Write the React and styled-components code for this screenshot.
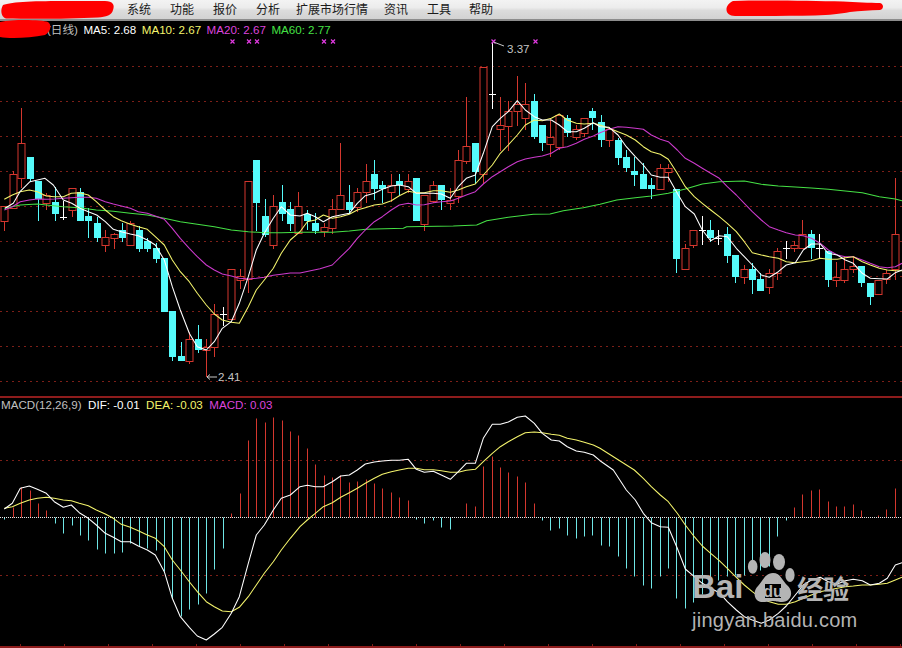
import React from "react";
import styled, { createGlobalStyle } from "styled-components";

const RED = "#d4372e";
const CYAN = "#55fbfb";
const WHITE = "#ffffff";
const YELLOW = "#f4f46c";
const MAGENTA = "#cc3acc";
const GREEN = "#45e045";
const GRID = "#7d1f18";

const menuItems = [
  { label: "系统", width: 43 },
  { label: "功能", width: 43 },
  { label: "报价", width: 43 },
  { label: "分析", width: 40 },
  { label: "扩展市场行情", width: 88 },
  { label: "资讯", width: 43 },
  { label: "工具", width: 42 },
  { label: "帮助", width: 30 },
];

// type, body top, body bottom, high, low
const candles = [
  ["r",206,221,206,231],["r",174,208,171,209],["r",143,178,108,188],["c",157,179,157,182],
  ["c",181,199,181,221],["r",195,203,193,210],["c",202,214,187,221],["w",217,217,201,220],
  ["r",188,210,188,217],["c",192,221,188,221],["c",216,221,208,238],["c",223,238,217,242],
  ["r",237,245,230,252],["r",234,238,233,249],["c",230,238,223,242],["r",223,245,221,245],
  ["c",230,249,226,252],["c",241,249,238,252],["c",248,259,243,263],["c",258,312,258,312],
  ["c",311,357,311,361],["c",356,361,342,361],["r",339,361,332,364],["c",339,350,325,353],
  ["r",347,350,339,377],["r",314,347,304,357],["w",314,314,307,326],["r",269,319,269,319],
  ["r",276,280,269,289],["r",181,279,181,293],["c",160,203,160,231],["c",216,235,199,237],
  ["r",206,245,195,249],["c",202,214,185,221],["c",209,224,202,231],["r",206,233,192,233],
  ["c",214,221,210,230],["c",223,231,213,234],["r",227,231,223,237],["r",209,228,199,234],
  ["r",195,209,143,210],["c",202,210,185,214],["r",192,207,188,212],["r",181,192,164,203],
  ["c",174,189,160,200],["c",185,189,181,203],["r",185,192,174,202],["c",181,185,174,196],
  ["r",181,189,174,193],["c",178,221,178,221],["r",195,224,195,231],["r",185,201,181,203],
  ["c",185,200,185,210],["r",200,203,188,210],["r",160,196,150,203],["r",146,161,97,164],
  ["c",143,172,143,184],["r",67,174,67,184],["w",94,94,42,109],["r",125,129,97,151],
  ["r",111,126,101,151],["r",104,111,76,126],["r",104,118,83,130],["c",101,137,94,139],
  ["c",125,143,125,151],["r",137,144,118,157],["r",115,147,115,150],["c",118,133,115,137],
  ["r",129,137,125,140],["r",118,133,118,137],["c",111,118,108,130],["c",122,140,115,147],
  ["r",129,140,127,147],["c",140,158,138,165],["c",157,168,150,172],["c",171,175,157,186],
  ["c",174,189,163,189],["c",185,189,178,199],["r",168,189,164,189],["r",168,172,164,182],
  ["c",189,259,189,273],["r",248,269,244,269],["r",230,245,230,248],["w",230,230,216,245],
  ["c",230,238,220,242],["w",238,238,230,245],["c",234,256,227,263],["c",255,277,255,283],
  ["r",269,277,265,284],["c",269,280,263,294],["c",279,291,273,291],["r",273,287,269,294],
  ["r",251,273,248,280],["w",248,248,241,259],["r",245,248,241,252],["r",234,248,220,248],
  ["c",234,248,230,259],["w",248,248,234,259],["c",251,280,251,287],["r",277,280,262,287],
  ["r",269,280,257,283],["r",266,269,256,273],["c",266,283,266,287],["c",283,297,283,305],
  ["r",280,294,280,294],["r",273,279,270,284],["r",234,269,178,280],
];

// one value per bar, in pixels above (+) or below (-) the zero line
const macdBars = [
  -2,10,30,27,14,7,-6,-16,-8,-18,-23,-32,-36,-36,-35,-26,-29,-31,-33,-54,-81,-99,-92,-87,-76,-52,-31,
  4,24,77,99,95,100,97,86,82,69,53,42,40,42,35,36,38,34,29,25,20,17,-2,-6,-3,-10,-12,0,14,11,51,61,50,
  45,41,35,14,-3,-13,-11,-18,-21,-19,-18,-28,-29,-39,-51,-59,-68,-71,-59,-51,-81,-91,-85,-77,-68,-63,
  -59,-58,-58,-54,-53,-49,-19,-3,10,23,27,28,16,11,11,13,7,0,2,8,29,
];

const barX = (i) => Math.round(4.3 + 8.4 * i);

// points were read off 3x crops, so each run keeps the crop origin
const run = (ox, oy, pts) => pts.map(([x, y]) => `${(ox + x / 3).toFixed(1)},${(oy + y / 3).toFixed(1)}`).join(" ");
const line = (...runs) => runs.join(" ");

const ma5 = line(
  run(0, 90, [[15,355],[40,340],[60,305],[90,275],[135,265],[160,285],[190,330],[215,340],[240,355],[265,365],[290,375],[316,395],[340,418],[364,425],[391,432],[415,437],[442,450],[466,465],[493,510],[517,590],[541,660],[568,730],[592,770],[619,780],[643,755],[667,715],[694,695],[718,640],[745,560],[769,480],[793,430],[820,385],[844,350],[871,375],[900,378]]),
  run(300, 30, [[22,550],[46,560],[70,575],[97,560],[122,555],[148,550],[172,520],[196,497],[223,490],[247,478],[274,468],[298,465],[325,470],[349,490],[373,490],[400,490],[424,492],[451,505],[475,470],[499,445],[526,435],[550,370],[577,290],[601,265],[625,245],[652,212],[676,240],[703,260],[727,270],[754,270],[778,285],[802,305],[829,305],[853,295],[880,278],[900,290]]),
  run(600, 90, [[27,112],[54,135],[79,170],[106,200],[130,225],[154,255],[181,262],[205,262],[232,310],[256,350],[283,372],[307,420],[332,452],[358,437],[382,440],[409,475],[433,500],[457,525],[484,555],[508,562],[535,545],[559,525],[586,518],[610,480],[634,462],[661,462],[685,490],[712,495],[736,510],[760,520],[787,550],[811,565],[838,566],[862,567],[886,548],[906,540]])
);

const ma10 = line(
  run(0, 90, [[13,328],[37,315],[61,305],[88,300],[112,305],[139,318],[163,320],[190,320],[214,310],[238,308],[265,315],[289,335],[316,360],[340,380],[364,392],[391,403],[415,410],[442,418],[466,440],[493,465],[517,510],[541,545],[568,575],[592,610],[619,645],[643,672],[667,690],[694,697],[718,700],[745,650],[769,600],[793,570],[820,535],[844,490],[871,450],[900,425]]),
  run(300, 30, [[22,575],[46,570],[70,555],[97,565],[122,560],[148,553],[172,540],[196,533],[223,525],[247,522],[274,512],[298,497],[325,484],[349,488],[373,488],[400,482],[424,482],[451,487],[475,480],[499,470],[526,462],[550,435],[577,405],[601,370],[625,345],[652,315],[676,285],[703,270],[727,272],[754,265],[778,252],[802,270],[829,280],[853,282],[880,280],[900,285]]),
  run(600, 90, [[27,115],[54,125],[79,135],[106,150],[130,170],[154,185],[181,193],[205,208],[232,250],[256,290],[283,320],[307,340],[332,360],[358,380],[382,400],[409,425],[433,455],[457,488],[484,495],[508,500],[535,505],[559,515],[586,518],[610,515],[634,512],[661,505],[685,508],[712,508],[736,503],[760,500],[787,515],[811,525],[838,535],[862,540],[886,542],[906,542]])
);

const ma20 = line(
  run(0, 90, [[13,360],[37,350],[61,335],[88,330],[112,327],[139,328],[163,327],[190,325],[214,323],[238,322],[265,322],[289,325],[316,335],[340,342],[364,348],[391,355],[415,365],[442,370],[466,378],[493,388],[517,415],[541,445],[568,475],[592,500],[619,525],[643,540],[667,552],[694,558],[718,565],[745,567],[769,565],[793,562],[820,556],[844,553],[871,549],[900,549]]),
  run(300, 30, [[60,716],[97,705],[122,680],[148,655],[172,625],[196,600],[223,575],[247,560],[274,540],[298,525],[325,520],[349,525],[373,524],[400,518],[424,515],[451,513],[475,505],[499,495],[526,485],[550,462],[577,440],[601,425],[625,410],[652,395],[676,387],[703,382],[727,378],[754,370],[778,355],[802,350],[829,340],[853,328],[880,318],[900,308]]),
  run(600, 90, [[27,118],[54,110],[79,112],[106,115],[130,118],[154,135],[181,148],[205,155],[232,180],[256,205],[283,220],[307,235],[332,250],[358,265],[382,290],[409,315],[433,340],[457,365],[484,390],[508,410],[535,420],[559,428],[586,435],[610,437],[634,445],[661,460],[685,480],[712,495],[736,500],[760,500],[787,510],[811,520],[838,530],[862,533],[886,530],[906,520]])
);

const ma60 = line(
  run(0, 90, [[13,355],[37,350],[61,345],[112,342],[139,345],[190,350],[238,353],[289,360],[340,364],[391,370],[442,375],[493,385],[541,395],[592,403],[643,410],[694,420],[745,425],[793,428],[844,428],[900,427]]),
  run(300, 30, [[97,607],[148,603],[198,598],[310,595],[320,590],[460,588],[530,585],[560,572],[625,562],[700,553],[750,552],[790,542],[850,533],[900,523]]),
  run(600, 90, [[50,330],[106,323],[154,318],[205,310],[256,297],[307,282],[358,275],[433,273],[484,283],[535,288],[586,291],[634,294],[685,298],[736,303],[787,308],[838,320],[886,327],[906,332]])
);

const dif = line(
  run(0, 390, [[13,357],[37,340],[61,295],[88,288],[112,298],[139,310],[163,335],[190,352],[214,345],[238,368],[265,385],[289,405],[316,430],[340,442],[364,455],[391,455],[415,468],[442,480],[466,495],[493,545],[517,625],[541,680],[568,712],[592,738],[619,750],[643,732],[667,712],[694,670],[718,620],[745,520],[769,435],[793,405],[820,360],[844,325],[871,315],[900,290]]),
  run(300, 390, [[22,286],[46,290],[70,290],[97,275],[122,258],[148,255],[172,240],[196,222],[223,216],[247,213],[274,211],[298,211],[325,208],[349,238],[373,247],[400,244],[424,255],[451,268],[475,245],[499,220],[526,220],[550,145],[577,103],[601,103],[625,96],[652,82],[676,78],[703,100],[727,130],[754,150],[778,153],[802,170],[829,183],[853,187],[880,195],[900,212]]),
  run(600, 470, [[40,0],[79,60],[106,90],[130,130],[154,158],[181,170],[205,172],[232,235],[256,297],[283,320],[307,340],[332,355],[358,368],[382,395],[409,420],[433,440],[457,450],[484,460],[508,450],[535,430],[559,408],[586,375],[610,345],[634,330],[661,322],[685,335],[712,342],[736,332],[760,328],[787,332],[811,345],[838,340],[862,325],[886,285],[906,278]])
);

const dea = line(
  run(0, 390, [[13,355],[37,350],[61,340],[88,330],[112,325],[139,322],[163,325],[190,330],[214,332],[238,340],[265,347],[289,360],[316,372],[340,385],[364,403],[391,412],[415,422],[442,435],[466,445],[493,470],[517,510],[541,540],[568,575],[592,605],[619,635],[643,650],[667,663],[694,665],[718,652],[745,620],[769,585],[793,550],[820,515],[844,480],[871,445],[900,410]]),
  run(300, 390, [[22,390],[46,370],[70,350],[97,338],[122,322],[148,308],[172,295],[196,280],[223,265],[247,253],[274,245],[298,240],[325,235],[349,235],[373,239],[400,239],[424,242],[451,247],[475,247],[499,241],[526,238],[550,215],[577,190],[601,170],[625,155],[652,140],[676,128],[703,126],[727,128],[754,133],[778,136],[802,145],[829,150],[853,157],[880,165],[900,175]]),
  run(600, 470, [[103,0],[130,25],[154,50],[181,75],[205,95],[232,130],[256,165],[283,200],[307,228],[332,250],[358,272],[382,295],[409,322],[433,345],[457,365],[484,385],[508,395],[535,403],[559,403],[586,395],[610,385],[634,375],[661,365],[685,360],[712,355],[736,350],[760,348],[787,345],[811,345],[838,343],[862,340],[886,330],[906,322]])
);

const priceGrid = [66.5, 101.5, 136.5, 171.5, 206.5, 241.5, 276.5, 311.5, 346.5, 381.5];
const macdGrid = [460.5, 575.5];
const markers = [232.5, 249, 257, 324, 333, 493.5, 535.5];
const bottomTicks = Array.from({ length: 21 }, (_, i) => 20 + i * 44);

function Candle({ type, top, bottom, high, low, x }) {
  if (type === "w") {
    return (
      <g stroke={WHITE} strokeWidth="1">
        <line x1={x + 0.5} x2={x + 0.5} y1={high} y2={low} />
        <line x1={x - 3} x2={x + 4} y1={top + 0.5} y2={top + 0.5} />
      </g>
    );
  }
  const color = type === "r" ? RED : CYAN;
  return (
    <g>
      <line x1={x + 0.5} x2={x + 0.5} y1={high} y2={low} stroke={color} strokeWidth="1" />
      {type === "r" ? (
        <rect x={x - 3} y={top + 0.5} width="7" height={bottom - top} fill="#000" stroke={color} strokeWidth="1" />
      ) : (
        <rect x={x - 3} y={top} width="7" height={bottom - top} fill={color} />
      )}
    </g>
  );
}

function PriceChart() {
  return (
    <Chart viewBox="0 21 902 375" width="902" height="375">
      {priceGrid.map((y) => (
        <GridLine key={y} x1="0" x2="902" y1={y} y2={y} />
      ))}
      {candles.map(([type, top, bottom, high, low], i) => (
        <Candle key={i} type={type} top={top} bottom={bottom} high={high} low={low} x={barX(i)} />
      ))}
      <MaLine points={ma60} stroke={GREEN} />
      <MaLine points={ma20} stroke={MAGENTA} />
      <MaLine points={ma10} stroke={YELLOW} />
      <MaLine points={ma5} stroke={WHITE} />
      {markers.map((x) => (
        <path key={x} d={`M${x - 2} 39.5l4 4m0 -4l-4 4`} stroke="#e23ae2" strokeWidth="1.2" fill="none" />
      ))}
      <path d="M493.5 42L504 46" stroke="#c8c8c8" fill="none" />
      <PriceLabel x="507" y="53">3.37</PriceLabel>
      <path d="M217 377H207M207 377l3 -2.5M207 377l3 2.5" stroke="#c8c8c8" fill="none" />
      <PriceLabel x="218" y="381">2.41</PriceLabel>
    </Chart>
  );
}

function MacdChart() {
  return (
    <Chart viewBox="0 398 902 248" width="902" height="248">
      {macdGrid.map((y) => (
        <GridLine key={y} x1="0" x2="902" y1={y} y2={y} />
      ))}
      {macdBars.map((v, i) =>
        v === 0 ? null : (
          <line
            key={i}
            x1={barX(i) + 0.5}
            x2={barX(i) + 0.5}
            y1={517.5}
            y2={517.5 - v}
            stroke={v > 0 ? RED : "#6fe6e6"}
            strokeWidth="1"
          />
        )
      )}
      <line x1="0" x2="902" y1="517.5" y2="517.5" stroke="#e8e8e8" strokeDasharray="1 1" />
      <MaLine points={dea} stroke={YELLOW} />
      <MaLine points={dif} stroke={WHITE} />
      {bottomTicks.map((x) => (
        <line key={x} x1={x + 0.5} x2={x + 0.5} y1="644" y2="646" stroke="#7d1f18" />
      ))}
    </Chart>
  );
}

function Watermark() {
  return (
    <Mark>
      <BrandRow>
        <BrandLatin>Bai</BrandLatin>
        <svg width="52" height="52" viewBox="0 0 52 52">
          <ellipse cx="9.700" cy="16.700" rx="4.800" ry="7" fill="#b4b4b4" />
          <ellipse cx="22" cy="10" rx="5.500" ry="8" fill="#b4b4b4" />
          <ellipse cx="36" cy="12" rx="6" ry="8" fill="#b4b4b4" />
          <ellipse cx="47" cy="25" rx="4.600" ry="7" fill="#b4b4b4" />
          <path
            fillRule="evenodd"
            fill="#b4b4b4"
            d="M30 23C38 23 39 31 45 36C51 42 48 52 39 52C34 52 33 51 30 51C27 51 26 52 20 52C11 52 9 42 15 36C20 31 22 23 30 23ZM22 34H38V48H22Z"
          />
          <PawText x="30" y="47">du</PawText>
        </svg>
        <BrandCjk>经验</BrandCjk>
      </BrandRow>
      <Domain>jingyan.baidu.com</Domain>
    </Mark>
  );
}

export default function App() {
  return (
    <Screen>
      <GlobalStyle />
      <MenuBar>
        {menuItems.map((item) => (
          <MenuItem key={item.label} $width={item.width}>{item.label}</MenuItem>
        ))}
      </MenuBar>

      <PricePanel>
        <PriceChart />
        <PriceLegend>
          <LegendText $color="#c0c0c0">(日线)</LegendText>
          <LegendText $color={WHITE}>MA5: 2.68</LegendText>
          <LegendText $color={YELLOW}>MA10: 2.67</LegendText>
          <LegendText $color="#dd44dd">MA20: 2.67</LegendText>
          <LegendText $color={GREEN}>MA60: 2.77</LegendText>
        </PriceLegend>
      </PricePanel>

      <MacdPanel>
        <MacdChart />
        <MacdLegend>
          <LegendText $color="#c0c0c0">MACD(12,26,9)</LegendText>
          <LegendText $color={WHITE}>DIF: -0.01</LegendText>
          <LegendText $color={YELLOW}>DEA: -0.03</LegendText>
          <LegendText $color="#dd44dd">MACD: 0.03</LegendText>
        </MacdLegend>
        <Watermark />
      </MacdPanel>

      {/* red scribbles hiding the stock name and account */}
      <Scribble viewBox="0 0 902 40" width="902" height="40">
        <path
          fill="#ff0000"
          d="M3 5C15 0 60 1 105 1C113 1 115 5 113 10C112 15 106 17 98 17.500C70 19 30 19 6 18.500C1 17 0 10 3 5Z"
        />
        <path
          fill="#ff0000"
          d="M0 22C15 19 42 20 48 22C52 25 51 31 45 35C30 38 10 39 0 37Z"
        />
        <path
          fill="#ff0000"
          d="M733 1C770 0 810 1 843 1.500C855 2 870 3 880 3C884 4 884 9 880 10C870 10 860 11 850 12C840 14 830 15 815 15.500C790 16 760 16 735 16C724 16 724 5 733 1Z"
        />
      </Scribble>
    </Screen>
  );
}

const GlobalStyle = createGlobalStyle`
  html, body {
    margin: 0;
    padding: 0;
    background: #000;
  }
`;

const Screen = styled.div`
  position: relative;
  width: 902px;
  height: 648px;
  display: flex;
  flex-direction: column;
  overflow: hidden;
  background: #000;
  font-family: "Liberation Sans", "Noto Sans CJK SC", sans-serif;
`;

const MenuBar = styled.div`
  box-sizing: border-box;
  flex: 0 0 21px;
  display: flex;
  align-items: center;
  padding: 0 0 2px 127px;
  background: linear-gradient(#f3f3f3 0%, #ececec 40%, #dcdcdc 55%, #d2d2d2 100%);
  border-bottom: 2px solid #8c8c8c;
`;

const MenuItem = styled.div`
  flex: 0 0 ${(p) => p.$width}px;
  font-family: "Noto Sans CJK SC", sans-serif;
  font-size: 12px;
  line-height: 16px;
  color: #1a1a1a;
  white-space: nowrap;
`;

const PricePanel = styled.div`
  position: relative;
  flex: 0 0 375px;
`;

const MacdPanel = styled.div`
  position: relative;
  box-sizing: border-box;
  flex: 0 0 252px;
  border-top: 2px solid #8e1c1c;
  border-bottom: 2px solid #8e1c1c;
`;

const Chart = styled.svg`
  display: block;
`;

const GridLine = styled.line`
  stroke: ${GRID};
  stroke-width: 1;
  stroke-dasharray: 2 4;
`;

const MaLine = styled.polyline.attrs({ fill: "none", strokeWidth: 1.05 })`
  stroke-linejoin: round;
`;

const PriceLabel = styled.text`
  font-family: "Liberation Sans", sans-serif;
  font-size: 11.600px;
  fill: #c4c4c4;
`;

const Legend = styled.div`
  position: absolute;
  display: flex;
  font-size: 11.600px;
  line-height: 14px;
  white-space: nowrap;
`;

const PriceLegend = styled(Legend)`
  left: 47px;
  top: 2px;
  gap: 5.500px;
`;

const MacdLegend = styled(Legend)`
  left: 1px;
  top: 0;
  gap: 6.500px;
`;

const LegendText = styled.span`
  color: ${(p) => p.$color};
`;

const Mark = styled.div`
  position: absolute;
  left: 692px;
  top: 155px;
  width: 170px;
`;

const BrandRow = styled.div`
  display: flex;
  align-items: flex-end;
  height: 49px;
`;

const BrandLatin = styled.span`
  font-family: "Liberation Sans", sans-serif;
  font-weight: 700;
  font-size: 33px;
  line-height: 30px;
  color: #b4b4b4;
`;

const BrandCjk = styled.span`
  font-family: "Noto Sans CJK SC", sans-serif;
  font-weight: 700;
  font-size: 26px;
  line-height: 28px;
  color: #b4b4b4;
  margin-left: 2px;
`;

const PawText = styled.text`
  font-family: "Liberation Sans", sans-serif;
  font-weight: 700;
  font-size: 16px;
  fill: #b4b4b4;
  text-anchor: middle;
`;

const Domain = styled.div`
  font-family: "Liberation Sans", sans-serif;
  font-size: 20px;
  line-height: 24px;
  margin-top: 6px;
  letter-spacing: 0.25px;
  color: #b4b4b4;
  white-space: nowrap;
`;

const Scribble = styled.svg`
  position: absolute;
  left: 0;
  top: 0;
  pointer-events: none;
`;
